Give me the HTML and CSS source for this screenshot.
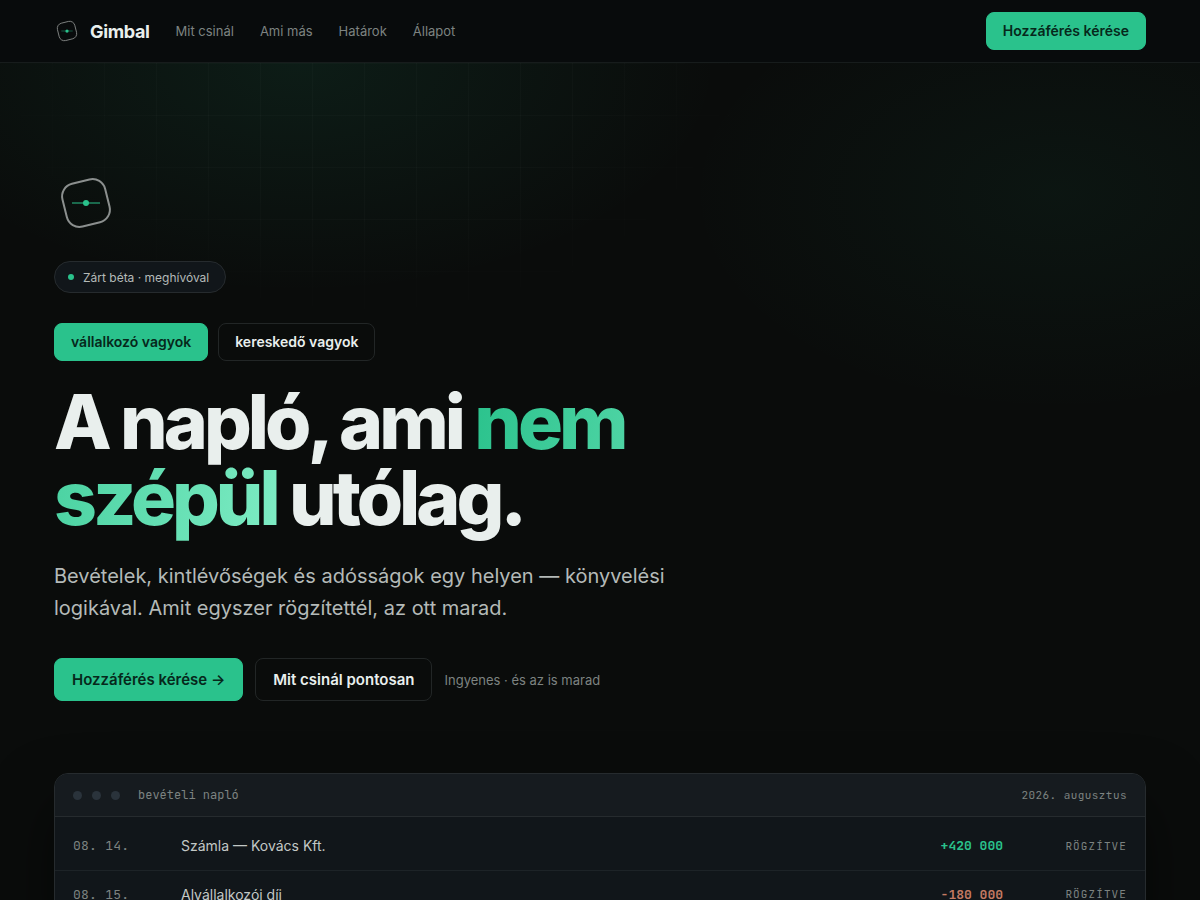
FILE: index.html
```html
<!DOCTYPE html>
<html lang="hu">
<head>
    <meta charset="UTF-8">
    <meta name="viewport" content="width=device-width, initial-scale=1.0">
    <title>Gimbal</title>
    <link rel="stylesheet" href="styles.css">
</head>
<body>

<!-- Navigation -->
<header class="topbar">
    <a class="brand" href="#">
        <svg class="brand-mark" viewBox="0 0 64 64" aria-hidden="true">
            <rect class="mark-frame" x="10" y="10" width="44" height="44" rx="13" transform="rotate(-14 32 32)"/>
            <path class="mark-line" d="M18 32h28"/>
            <circle class="mark-dot" cx="32" cy="32" r="4"/>
        </svg>
        <span>Gimbal</span>
    </a>
    <nav class="links">
        <a href="#mit">Mit csinál</a>
        <a href="#mas">Ami más</a>
        <a href="#hatarok">Határok</a>
        <a href="#allapot">Állapot</a>
    </nav>
    <button class="btn btn-primary" type="button">Hozzáférés kérése</button>
</header>

<!-- Hero -->
<main class="hero">
    <svg class="hero-mark" viewBox="0 0 64 64" aria-hidden="true">
        <rect class="mark-frame" x="10" y="10" width="44" height="44" rx="13" transform="rotate(-14 32 32)"/>
        <path class="mark-line" d="M18 32h28"/>
        <circle class="mark-dot" cx="32" cy="32" r="3"/>
    </svg>

    <p class="pill"><span class="pill-dot"></span>Zárt béta · meghívóval</p>

    <div class="roles">
        <button class="btn btn-primary" type="button">vállalkozó vagyok</button>
        <button class="btn btn-ghost" type="button">kereskedő vagyok</button>
    </div>

    <h1>A napló, ami <em>nem szépül</em> utólag.</h1>
    <p class="lead">Bevételek, kintlévőségek és adósságok egy helyen — könyvelési logikával. Amit egyszer rögzítettél, az ott marad.</p>

    <div class="actions">
        <button class="btn btn-large btn-primary" type="button">Hozzáférés kérése →</button>
        <button class="btn btn-large btn-ghost" type="button">Mit csinál pontosan</button>
        <span class="note">Ingyenes · és az is marad</span>
    </div>

    <!-- Ledger preview -->
    <section class="ledger">
        <div class="ledger-head">
            <span class="dots"><i></i><i></i><i></i></span>
            <span class="ledger-title">bevételi napló</span>
            <span class="ledger-month">2026. augusztus</span>
        </div>
        <div class="ledger-body">
            <table>
                <tr>
                    <td class="date">08. 14.</td>
                    <td class="item">Számla — Kovács Kft.</td>
                    <td class="amount plus">+420 000</td>
                    <td class="status">RÖGZÍTVE</td>
                </tr>
                <tr>
                    <td class="date">08. 15.</td>
                    <td class="item">Alvállalkozói díj</td>
                    <td class="amount minus">-180 000</td>
                    <td class="status">RÖGZÍTVE</td>
                </tr>
            </table>
        </div>
    </section>
</main>

</body>
</html>
```
FILE: styles.css
```css
:root {
    --bg: #0a0c0b;
    --panel: #11161a;
    --panel-head: #161b1f;
    --line: #262b2e;
    --text: #e9efed;
    --soft: #b4bab8;
    --muted: #7d8381;
    --green: #2ac28c;
    --mono: "JetBrains Mono", "Liberation Mono", monospace;
}

* {
    box-sizing: border-box;
}

body {
    margin: 0;
    background: var(--bg);
    color: var(--text);
    font-family: Inter, sans-serif;
    font-size: 14px;
}

a {
    color: inherit;
    text-decoration: none;
}

/* Navigation */
.topbar {
    position: sticky;
    top: 0;
    z-index: 5;
    display: flex;
    align-items: center;
    gap: 26px;
    height: 63px;
    padding: 0 54px;
    background: #080b0c;
    border-bottom: 1px solid #171c1c;
}

.brand {
    display: flex;
    align-items: center;
    gap: 10px;
    font-size: 18px;
    font-weight: 700;
    letter-spacing: -0.02em;
}

.brand-mark {
    width: 26px;
    height: 26px;
}

.links {
    display: flex;
    gap: 26px;
    flex: 1;
    color: var(--muted);
    font-size: 13px;
}

/* Logo */
.mark-frame {
    fill: none;
    stroke: #8b8f8e;
    stroke-width: 2;
}

.mark-line {
    stroke: var(--green);
    stroke-width: 2;
    opacity: 0.5;
}

.mark-dot {
    fill: var(--green);
}

/* Buttons */
.btn {
    height: 38px;
    padding: 0 16px 2px;
    border: 1px solid transparent;
    border-radius: 8px;
    font: 600 14px Inter, sans-serif;
    white-space: nowrap;
    cursor: pointer;
}

.btn-large {
    height: 43px;
    padding: 0 17px;
    font-size: 15px;
}

.btn-primary {
    background: var(--green);
    border-color: var(--green);
    color: #06281b;
}

.btn-ghost {
    background: transparent;
    border-color: #222626;
    color: var(--text);
}

/* Hero */
.hero {
    position: relative;
    padding: 108px 54px 80px;
    background:
        radial-gradient(ellipse 420px 230px at 300px 0, rgba(42, 194, 140, 0.09), transparent),
        radial-gradient(ellipse 370px 220px at 88% 130px, rgba(42, 194, 140, 0.05), transparent);
}

/* faint squared paper behind the heading */
.hero::before {
    content: "";
    position: absolute;
    inset: 0;
    background:
        linear-gradient(to right, rgba(255, 255, 255, 0.02) 1px, transparent 1px),
        linear-gradient(to bottom, rgba(255, 255, 255, 0.02) 1px, transparent 1px);
    background-size: 52px 52px;
    mask-image: radial-gradient(ellipse 420px 290px at 370px 0, #000 50%, transparent);
    pointer-events: none;
}

.hero > * {
    position: relative;
}

.hero-mark {
    display: block;
    width: 64px;
    height: 64px;
}

.pill {
    display: flex;
    align-items: center;
    gap: 9px;
    width: fit-content;
    height: 32px;
    margin: 26px 0 30px;
    padding: 0 16px 0 13px;
    background: var(--panel);
    border: 1px solid var(--line);
    border-radius: 16px;
    color: var(--soft);
    font-size: 12px;
}

.pill-dot {
    width: 6px;
    height: 6px;
    border-radius: 50%;
    background: var(--green);
}

.roles {
    display: flex;
    gap: 10px;
}

h1 {
    max-width: 640px;
    margin: 23px 0 24px;
    font-size: 75px;
    font-weight: 800;
    line-height: 76px;
    letter-spacing: -4px;
}

h1 em {
    font-style: normal;
    color: transparent;
    background: linear-gradient(100deg, #2ac28c, #7eecc4);
    background-clip: text;
}

.lead {
    max-width: 620px;
    margin: 0;
    color: var(--soft);
    font-size: 20px;
    line-height: 32px;
}

.actions {
    display: flex;
    align-items: center;
    gap: 12px;
    margin: 34px 0 72px;
}

.note {
    color: var(--muted);
    font-size: 13px;
}

/* Ledger */
.ledger {
    overflow: hidden;
    background: var(--panel);
    border: 1px solid var(--line);
    border-radius: 14px;
    box-shadow: 0 30px 60px rgba(0, 0, 0, 0.5);
}

.ledger-head {
    display: flex;
    align-items: center;
    gap: 18px;
    height: 43px;
    padding: 0 18px;
    background: var(--panel-head);
    border-bottom: 1px solid var(--line);
    color: var(--muted);
    font-family: var(--mono);
    font-size: 12px;
}

.dots {
    display: flex;
    gap: 10px;
}

.dots i {
    width: 9px;
    height: 9px;
    border-radius: 50%;
    background: #2a333b;
}

.ledger-month {
    margin-left: auto;
    font-size: 11px;
    letter-spacing: 0.04em;
}

.ledger-body {
    padding: 5px 0;
}

table {
    width: 100%;
    border-collapse: collapse;
}

td {
    height: 48px;
    padding: 0;
    border-bottom: 1px solid #1d2327;
}

.date {
    width: 126px;
    padding-left: 18px;
    color: var(--muted);
    font-family: var(--mono);
    font-size: 13px;
    letter-spacing: 0.02em;
}

.item {
    color: #c3c8c6;
}

.amount {
    text-align: right;
    font-family: var(--mono);
    font-size: 13px;
    font-weight: 600;
}

.plus {
    color: var(--green);
}

.minus {
    color: #c47a62;
}

.status {
    width: 142px;
    padding-right: 18px;
    text-align: right;
    color: var(--muted);
    font-family: var(--mono);
    font-size: 11px;
    letter-spacing: 0.1em;
}
```
